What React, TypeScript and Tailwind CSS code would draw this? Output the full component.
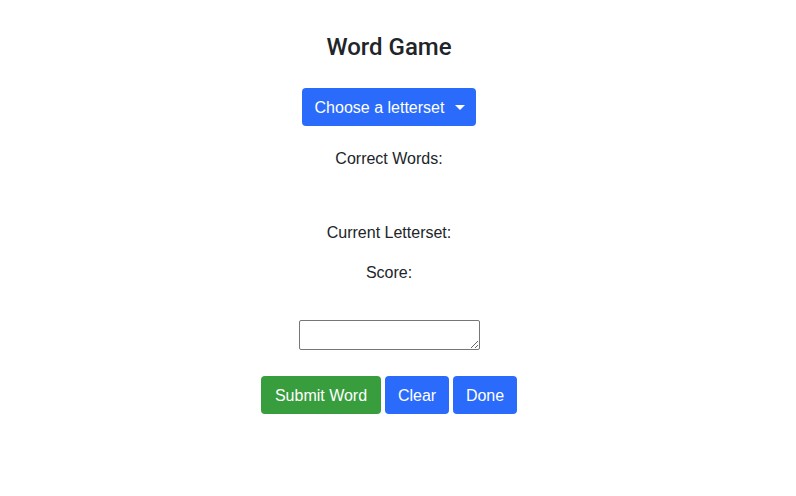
import React from "react";

export default function App() {
  return (
    <div className="w-[778px] h-[496px] bg-white text-[#212529] flex flex-col items-center" style={{ fontFamily: '"Liberation Sans", Arial, sans-serif' }}>
      <h4 className="mt-[33px] text-[24px] leading-[29px] font-medium" style={{ fontFamily: 'Roboto, "Liberation Sans", sans-serif' }}>Word Game</h4>
      <button className="mt-[26px] h-[38px] pl-[13px] pr-[11px] rounded-[4px] bg-[#2a6bfb] text-white text-[16px] leading-[24px] flex items-center">
        <span className="pt-[1px]">Choose a letterset</span>
        <span className="ml-[11px] w-0 h-0 border-t-[5px] border-t-white border-x-[5px] border-x-transparent"></span>
      </button>
      <p className="mt-[21px] text-[16px] leading-[24px]">Correct Words:</p>
      <p className="mt-[50px] text-[16px] leading-[24px]">Current Letterset:</p>
      <p className="mt-[16px] text-[16px] leading-[24px]">Score:</p>
      <textarea className="mt-[35px] w-[181px] h-[30px] border border-[#767676] rounded-[2px] resize-y outline-none" />
      <div className="mt-[26px] flex gap-[4px]">
        <button className="h-[38px] w-[120px] pt-[1px] rounded-[4px] bg-[#379d3d] text-white text-[16px]">Submit Word</button>
        <button className="h-[38px] w-[64px] pt-[1px] rounded-[4px] bg-[#2a6bfb] text-white text-[16px]">Clear</button>
        <button className="h-[38px] w-[64px] pt-[1px] rounded-[4px] bg-[#2a6bfb] text-white text-[16px]">Done</button>
      </div>
    </div>
  );
}
